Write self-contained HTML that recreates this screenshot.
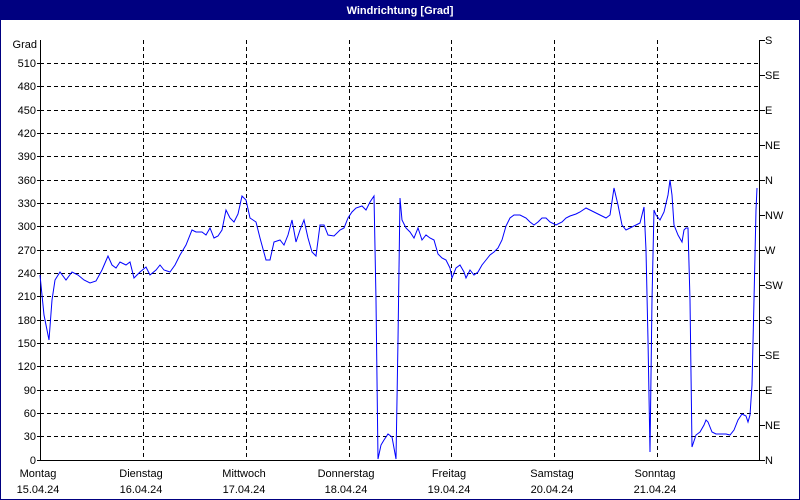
<!DOCTYPE html>
<html><head><meta charset="utf-8"><style>
html,body{margin:0;padding:0;background:#fff}
svg{display:block}
text{font-family:"Liberation Sans","DejaVu Sans",sans-serif;font-size:11px;fill:#000}
</style></head><body>
<svg width="800" height="500" viewBox="0 0 800 500" xmlns="http://www.w3.org/2000/svg">
<rect x="0" y="0" width="800" height="500" fill="#fff"/>
<rect x="0.5" y="0.5" width="799" height="499" fill="none" stroke="#000080"/>
<rect x="0" y="0" width="800" height="20" fill="#000080"/>
<text x="400" y="14" text-anchor="middle" style="font-weight:bold;fill:#fff">Windrichtung [Grad]</text>
<g stroke="#000" stroke-dasharray="4,3" stroke-width="1">
<line x1="40" y1="63.5" x2="760" y2="63.5"/>
<line x1="40" y1="86.5" x2="760" y2="86.5"/>
<line x1="40" y1="110.5" x2="760" y2="110.5"/>
<line x1="40" y1="133.5" x2="760" y2="133.5"/>
<line x1="40" y1="156.5" x2="760" y2="156.5"/>
<line x1="40" y1="180.5" x2="760" y2="180.5"/>
<line x1="40" y1="203.5" x2="760" y2="203.5"/>
<line x1="40" y1="226.5" x2="760" y2="226.5"/>
<line x1="40" y1="250.5" x2="760" y2="250.5"/>
<line x1="40" y1="273.5" x2="760" y2="273.5"/>
<line x1="40" y1="296.5" x2="760" y2="296.5"/>
<line x1="40" y1="320.5" x2="760" y2="320.5"/>
<line x1="40" y1="343.5" x2="760" y2="343.5"/>
<line x1="40" y1="366.5" x2="760" y2="366.5"/>
<line x1="40" y1="390.5" x2="760" y2="390.5"/>
<line x1="40" y1="413.5" x2="760" y2="413.5"/>
<line x1="40" y1="436.5" x2="760" y2="436.5"/>
<line x1="143.5" y1="40" x2="143.5" y2="460"/>
<line x1="246.5" y1="40" x2="246.5" y2="460"/>
<line x1="349.5" y1="40" x2="349.5" y2="460"/>
<line x1="451.5" y1="40" x2="451.5" y2="460"/>
<line x1="554.5" y1="40" x2="554.5" y2="460"/>
<line x1="657.5" y1="40" x2="657.5" y2="460"/>
</g>
<g stroke="#000" stroke-width="1">
<line x1="40.5" y1="40" x2="40.5" y2="461"/>
<line x1="759.5" y1="40" x2="759.5" y2="461"/>
<line x1="37" y1="460.5" x2="765" y2="460.5"/>
<line x1="37" y1="63.5" x2="40" y2="63.5"/><line x1="37" y1="86.5" x2="40" y2="86.5"/><line x1="37" y1="110.5" x2="40" y2="110.5"/><line x1="37" y1="133.5" x2="40" y2="133.5"/><line x1="37" y1="156.5" x2="40" y2="156.5"/><line x1="37" y1="180.5" x2="40" y2="180.5"/><line x1="37" y1="203.5" x2="40" y2="203.5"/><line x1="37" y1="226.5" x2="40" y2="226.5"/><line x1="37" y1="250.5" x2="40" y2="250.5"/><line x1="37" y1="273.5" x2="40" y2="273.5"/><line x1="37" y1="296.5" x2="40" y2="296.5"/><line x1="37" y1="320.5" x2="40" y2="320.5"/><line x1="37" y1="343.5" x2="40" y2="343.5"/><line x1="37" y1="366.5" x2="40" y2="366.5"/><line x1="37" y1="390.5" x2="40" y2="390.5"/><line x1="37" y1="413.5" x2="40" y2="413.5"/><line x1="37" y1="436.5" x2="40" y2="436.5"/>
<line x1="760" y1="40.5" x2="765" y2="40.5"/><line x1="760" y1="75.5" x2="765" y2="75.5"/><line x1="760" y1="110.5" x2="765" y2="110.5"/><line x1="760" y1="145.5" x2="765" y2="145.5"/><line x1="760" y1="180.5" x2="765" y2="180.5"/><line x1="760" y1="215.5" x2="765" y2="215.5"/><line x1="760" y1="250.5" x2="765" y2="250.5"/><line x1="760" y1="285.5" x2="765" y2="285.5"/><line x1="760" y1="320.5" x2="765" y2="320.5"/><line x1="760" y1="355.5" x2="765" y2="355.5"/><line x1="760" y1="390.5" x2="765" y2="390.5"/><line x1="760" y1="425.5" x2="765" y2="425.5"/>
</g>
<g text-anchor="end">
<text x="37" y="48">Grad</text>
<text x="36" y="67">510</text><text x="36" y="90">480</text><text x="36" y="114">450</text><text x="36" y="137">420</text><text x="36" y="160">390</text><text x="36" y="184">360</text><text x="36" y="207">330</text><text x="36" y="230">300</text><text x="36" y="254">270</text><text x="36" y="277">240</text><text x="36" y="300">210</text><text x="36" y="324">180</text><text x="36" y="347">150</text><text x="36" y="370">120</text><text x="36" y="394">90</text><text x="36" y="417">60</text><text x="36" y="440">30</text><text x="36" y="464">0</text>
</g>
<g>
<text x="765" y="44">S</text><text x="765" y="79">SE</text><text x="765" y="114">E</text><text x="765" y="149">NE</text><text x="765" y="184">N</text><text x="765" y="219">NW</text><text x="765" y="254">W</text><text x="765" y="289">SW</text><text x="765" y="324">S</text><text x="765" y="359">SE</text><text x="765" y="394">E</text><text x="765" y="429">NE</text><text x="765" y="464">N</text>
</g>
<g text-anchor="middle">
<text x="38" y="477">Montag</text><text x="38" y="493">15.04.24</text>
<text x="141" y="477">Dienstag</text><text x="141" y="493">16.04.24</text>
<text x="244" y="477">Mittwoch</text><text x="244" y="493">17.04.24</text>
<text x="346" y="477">Donnerstag</text><text x="346" y="493">18.04.24</text>
<text x="449" y="477">Freitag</text><text x="449" y="493">19.04.24</text>
<text x="552" y="477">Samstag</text><text x="552" y="493">20.04.24</text>
<text x="655" y="477">Sonntag</text><text x="655" y="493">21.04.24</text>
</g>
<polyline fill="none" stroke="#0000ff" stroke-width="1" points="40,275 44,315 49,340 52,300 55,280 60,272 66,280 72,272 78,275 84,280 90,283 96,281 102,270 108,256 112,265 116,268 120,262 126,265 130,262 134,278 140,272 146,267 150,275 156,270 160,265 164,270 170,272 175,265 180,255 186,245 192,230 196,232 202,232 206,235 210,228 214,238 218,236 222,230 226,210 230,218 234,222 238,214 242,196 246,200 250,218 256,222 260,238 266,260 270,260 274,242 280,240 284,245 288,235 292,220 296,242 300,230 304,220 308,238 312,252 316,256 320,225 324,225 328,235 334,236 340,230 344,228 348,218 352,212 356,208 362,206 366,210 370,202 374,196 376,300 378,459 381,445 384,440 388,434 392,437 396,459 398,340 400,198 402,220 406,228 410,232 414,238 418,228 422,240 426,235 430,238 434,240 438,254 442,258 446,260 450,268 452,278 456,268 460,265 464,272 466,278 470,270 474,275 478,272 482,265 486,260 490,255 494,252 498,248 502,240 506,226 510,218 514,215 520,215 526,218 530,222 534,225 538,222 542,218 546,218 550,222 556,225 562,222 566,218 570,216 576,214 580,212 586,208 590,210 596,213 600,215 606,218 610,215 614,188 618,205 622,225 626,230 630,228 636,225 640,223 644,207 646,250 648,340 650,452 652,300 654,210 656,215 660,220 664,212 668,195 670,180 672,195 674,225 678,235 682,242 684,230 686,228 688,228 690,300 692,447 696,435 700,432 704,425 706,420 708,422 712,432 716,434 722,434 726,434 730,435 734,430 738,420 742,414 746,416 748,422 750,415 752,385 754,300 756,210 757,188"/>
</svg>
</body></html>
